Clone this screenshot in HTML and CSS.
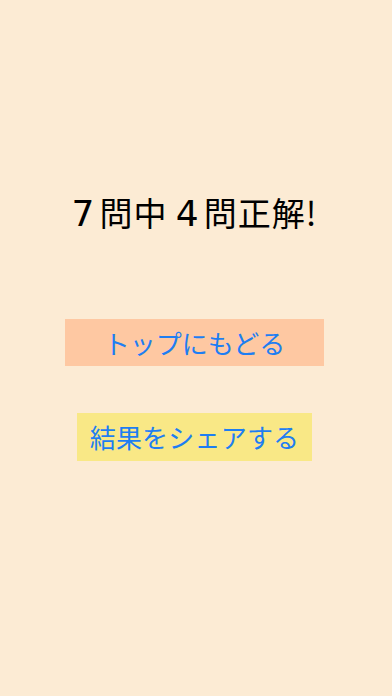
FILE: index.html
```html
<!DOCTYPE html>
<html lang="ja">
<head>
<meta charset="utf-8">
<link rel="stylesheet" href="styles.css">
</head>
<body>
<main class="screen">
  <h1 class="result"><span class="num">7</span>問中 <span class="num">4</span>問正解!</h1>
  <div class="btn btn-top">トップにもどる</div>
  <div class="btn btn-share">結果をシェアする</div>
</main>
</body>
</html>
```

FILE: styles.css
```css
html, body {
  margin: 0;
  padding: 0;
  background: #fcebd4;
}
.screen {
  width: 392px;
  height: 696px;
  display: flex;
  flex-direction: column;
  align-items: center;
  font-family: "Noto Sans CJK JP", "Noto Sans", sans-serif;
  padding-right: 3px;
  box-sizing: border-box;
}
.result {
  margin: 192px 0 0 0;
  font-size: 33px;
  line-height: 40px;
  font-weight: 400;
  color: #000;
  height: 40px;
  white-space: nowrap;
  letter-spacing: 1px;
}
.num {
  font-family: "DejaVu Sans", sans-serif;
  font-size: 36px;
  margin-right: 5px;
  letter-spacing: 0;
}
.btn {
  display: flex;
  align-items: center;
  justify-content: center;
  font-size: 26px;
  color: #1e7ef2;
  line-height: 1;
}
.btn-top {
  margin-top: 87px;
  width: 259px;
  height: 47px;
  background: #fec8a2;
}
.btn-share {
  margin-top: 47px;
  width: 235px;
  height: 48px;
  background: #f9e886;
  letter-spacing: 0.2px;
}
```
